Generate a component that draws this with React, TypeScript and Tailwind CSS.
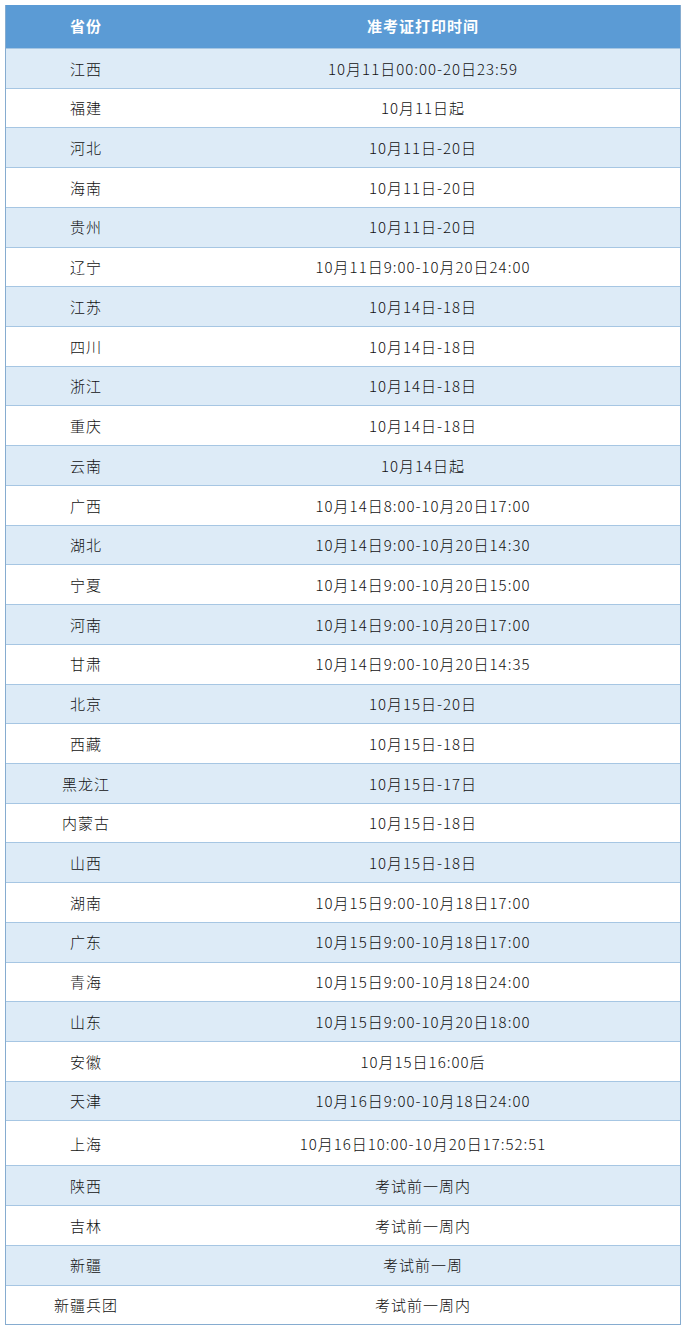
const rows: [string, string][] = [
  ["江西", "10月11日00:00-20日23:59"],
  ["福建", "10月11日起"],
  ["河北", "10月11日-20日"],
  ["海南", "10月11日-20日"],
  ["贵州", "10月11日-20日"],
  ["辽宁", "10月11日9:00-10月20日24:00"],
  ["江苏", "10月14日-18日"],
  ["四川", "10月14日-18日"],
  ["浙江", "10月14日-18日"],
  ["重庆", "10月14日-18日"],
  ["云南", "10月14日起"],
  ["广西", "10月14日8:00-10月20日17:00"],
  ["湖北", "10月14日9:00-10月20日14:30"],
  ["宁夏", "10月14日9:00-10月20日15:00"],
  ["河南", "10月14日9:00-10月20日17:00"],
  ["甘肃", "10月14日9:00-10月20日14:35"],
  ["北京", "10月15日-20日"],
  ["西藏", "10月15日-18日"],
  ["黑龙江", "10月15日-17日"],
  ["内蒙古", "10月15日-18日"],
  ["山西", "10月15日-18日"],
  ["湖南", "10月15日9:00-10月18日17:00"],
  ["广东", "10月15日9:00-10月18日17:00"],
  ["青海", "10月15日9:00-10月18日24:00"],
  ["山东", "10月15日9:00-10月20日18:00"],
  ["安徽", "10月15日16:00后"],
  ["天津", "10月16日9:00-10月18日24:00"],
  ["上海", "10月16日10:00-10月20日17:52:51"],
  ["陕西", "考试前一周内"],
  ["吉林", "考试前一周内"],
  ["新疆", "考试前一周"],
  ["新疆兵团", "考试前一周内"],
];

export default function App() {
  return (
    <div className="bg-white w-[688px] h-[1333px] pt-[5px] pl-[5px]" style={{ fontFamily: '"Noto Sans CJK SC", "Noto Sans", sans-serif' }}>
      <div className="w-[676px] border-x border-b border-[#86acd0]">
        <div className="flex h-[43px] bg-[#5b9bd5] text-white font-bold text-[15px] tracking-[1px]">
          <div className="w-[160px] flex items-center justify-center">省份</div>
          <div className="flex-1 flex items-center justify-center">准考证打印时间</div>
        </div>
        {rows.map(([prov, time], i) => (
          <div
            key={prov}
            className={`flex text-[15px] font-light tracking-[1px] text-[#111] border-t border-[#a6c6e3] ${
              i % 2 === 0 ? "bg-[#ddebf7]" : "bg-white"
            } ${prov === "上海" ? "h-[45px]" : "h-[39.72px]"}`}
          >
            <div className="w-[160px] flex items-center justify-center pt-[1px]">{prov}</div>
            <div className="flex-1 flex items-center justify-center pt-[1px]">{time}</div>
          </div>
        ))}
      </div>
    </div>
  );
}
